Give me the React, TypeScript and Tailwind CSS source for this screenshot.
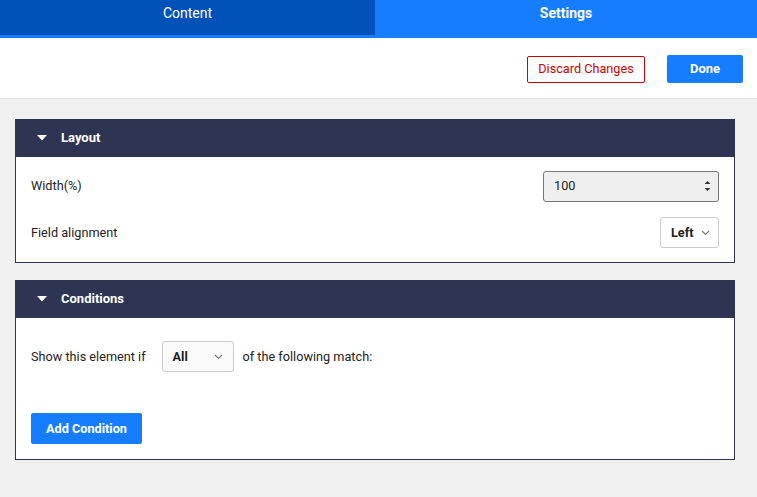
import React from "react";

function Caret() {
  return (
    <svg width="10" height="6" viewBox="0 0 10 6" className="shrink-0">
      <path d="M0 0 L10 0 L5 5.5 Z" fill="#ffffff" />
    </svg>
  );
}

function Chevron() {
  return (
    <svg width="9" height="6" viewBox="0 0 9 6" className="shrink-0">
      <path d="M1 1 L4.5 4.5 L8 1" fill="none" stroke="#777" strokeWidth="1.1" />
    </svg>
  );
}

function Panel({ title, children }: { title: string; children: React.ReactNode }) {
  return (
    <div className="border border-[#2d3553] bg-white">
      <div className="flex h-[37px] items-center gap-[14px] bg-[#2d3553] pb-[2px] pl-[21px] text-[13px] font-bold text-white">
        <Caret />
        <span>{title}</span>
      </div>
      {children}
    </div>
  );
}

export default function App() {
  return (
    <div
      className="min-h-[497px] w-full bg-[#f0f0f0] text-[#222]"
      style={{ fontFamily: "Roboto, 'Liberation Sans', sans-serif" }}
    >
      <div className="flex h-[38px] bg-[#167dff] text-[14px] text-white">
        <div className="flex h-[35px] w-[375px] items-center justify-center bg-[#0052b8] pb-[9px]">Content</div>
        <div className="flex h-[35px] flex-1 items-center justify-center pb-[9px] font-bold">Settings</div>
      </div>
      <div className="flex h-[61px] items-center justify-end gap-[22px] border-b border-[#e2e2e2] bg-white pr-[14px] pt-[2px]">
        <button className="flex h-[27px] w-[118px] items-center justify-center rounded-[2px] border border-[#c00] bg-white text-[12.7px] text-[#c00]">
          Discard Changes
        </button>
        <button className="flex h-[28px] w-[76px] items-center justify-center rounded-[2px] bg-[#167dff] text-[13px] font-bold text-white">
          Done
        </button>
      </div>
      <div className="flex flex-col gap-[17px] pl-[15px] pr-[22px] pt-[20px] pb-[36px]">
        <Panel title="Layout">
          <div className="flex flex-col px-[15px] pt-[14px] pb-[14px] text-[12.7px]">
            <div className="flex h-[30px] items-center justify-between">
              <span>Width(%)</span>
              <div className="flex h-[31px] w-[176px] items-center justify-between rounded-[3px] border border-[#767676] bg-[#efefef] pl-[10px] pr-[7px]">
                <span>100</span>
                <svg width="7" height="12" viewBox="0 0 7 12">
                  <path d="M0.5 4 L3.5 1 L6.5 4 Z" fill="#333" />
                  <path d="M0.5 8 L3.5 11 L6.5 8 Z" fill="#333" />
                </svg>
              </div>
            </div>
            <div className="mt-[16px] flex h-[31px] items-center justify-between">
              <span>Field alignment</span>
              <div className="flex h-[31px] w-[59px] items-center justify-between rounded-[3px] border border-[#ccc] bg-white pl-[10px] pr-[8px]">
                <span className="font-bold">Left</span>
                <Chevron />
              </div>
            </div>
          </div>
        </Panel>
        <Panel title="Conditions">
          <div className="flex flex-col px-[15px] pt-[23px] pb-[15px] text-[12.7px]">
            <div className="flex h-[31px] items-center">
              <span>Show this element if</span>
              <div className="ml-[16px] flex h-[31px] w-[72px] items-center justify-between rounded-[3px] border border-[#ccc] bg-[#fafafa] pl-[10px] pr-[10px]">
                <span className="font-bold">All</span>
                <Chevron />
              </div>
              <span className="ml-[9px]">of the following match:</span>
            </div>
            <button className="mt-[41px] flex h-[31px] w-[111px] items-center justify-center rounded-[2px] bg-[#167dff] text-[12.7px] font-bold text-white">
              Add Condition
            </button>
          </div>
        </Panel>
      </div>
    </div>
  );
}
